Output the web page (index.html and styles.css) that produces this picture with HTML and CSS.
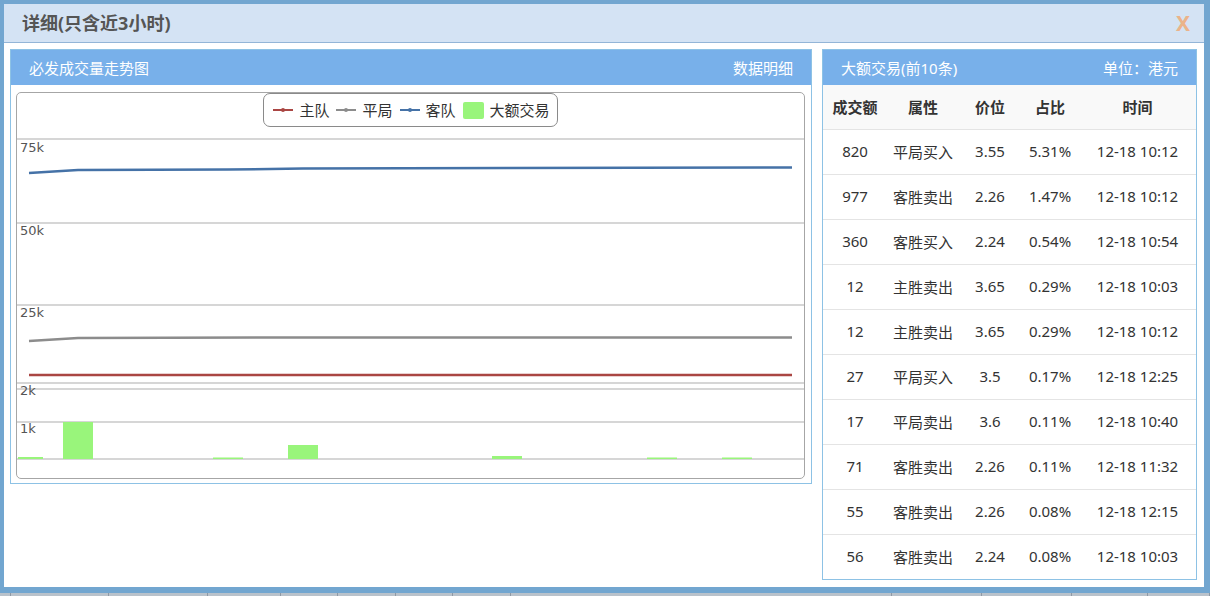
FILE: index.html
```html
<!DOCTYPE html>
<html lang="zh-CN">
<head>
<meta charset="utf-8">
<title>详细</title>
<link rel="stylesheet" href="styles.css">
</head>
<body>
<div class="window">
  <div class="titlebar">
    <span class="title">详细(只含近3小时)</span>
    <span class="close">X</span>
  </div>
  <div class="content">
    <div class="panel panel-chart">
      <div class="panel-head"><span>必发成交量走势图</span><span>数据明细</span></div>
      <div class="chart-box">
        <div class="legend">
          <span class="lg-item"><svg class="lg-line" width="20" height="8" viewBox="0 0 20 8"><line x1="0" y1="4" x2="20" y2="4" stroke="#aa4643" stroke-width="2"/><circle cx="10" cy="4" r="2" fill="#aa4643"/></svg>主队</span>
          <span class="lg-item"><svg class="lg-line" width="20" height="8" viewBox="0 0 20 8"><line x1="0" y1="4" x2="20" y2="4" stroke="#8c8c8c" stroke-width="2"/><circle cx="10" cy="4" r="2" fill="#8c8c8c"/></svg>平局</span>
          <span class="lg-item"><svg class="lg-line" width="20" height="8" viewBox="0 0 20 8"><line x1="0" y1="4" x2="20" y2="4" stroke="#4572a7" stroke-width="2"/><circle cx="10" cy="4" r="2" fill="#4572a7"/></svg>客队</span>
          <span class="lg-item"><span class="lg-box"></span>大额交易</span>
        </div>
        <svg class="plot" width="787" height="351" viewBox="0 0 787 351">
          <g stroke="#c9c9c9" stroke-width="1.5">
            <line x1="0" y1="12" x2="787" y2="12"/>
            <line x1="0" y1="96" x2="787" y2="96"/>
            <line x1="0" y1="178" x2="787" y2="178"/>
            <line x1="0" y1="256" x2="787" y2="256"/>
            <line x1="0" y1="262" x2="787" y2="262"/>
            <line x1="0" y1="295" x2="787" y2="295"/>
            <line x1="0" y1="332" x2="787" y2="332"/>
          </g>
          <g class="axis-label" fill="#555" font-size="13">
            <text x="3" y="25">75k</text>
            <text x="3" y="108">50k</text>
            <text x="3" y="190">25k</text>
            <text x="3" y="268">2k</text>
            <text x="3" y="306">1k</text>
          </g>
          <polyline fill="none" stroke="#4572a7" stroke-width="2.5" points="12,46 61,43 211,42.5 286,41.5 490,41 775,40.5"/>
          <polyline fill="none" stroke="#8c8c8c" stroke-width="2.5" points="12,214 61,211 286,210.5 775,210.5"/>
          <polyline fill="none" stroke="#aa4643" stroke-width="2.5" points="12,248 775,248"/>
          <g fill="#99f57b">
            <rect x="1" y="330" width="25" height="2"/>
            <rect x="46" y="295" width="30" height="37"/>
            <rect x="196" y="330.5" width="30" height="1.5"/>
            <rect x="271" y="318" width="30" height="14"/>
            <rect x="475" y="329" width="30" height="3"/>
            <rect x="630" y="330.5" width="30" height="1.5"/>
            <rect x="705" y="330.5" width="30" height="1.5"/>
          </g>
        </svg>
      </div>
    </div>
    <div class="panel panel-table">
      <div class="panel-head"><span>大额交易(前10条)</span><span>单位：港元</span></div>
      <table class="trades">
        <colgroup><col class="c1"><col class="c2"><col class="c3"><col class="c4"><col class="c5"></colgroup>
        <thead>
          <tr><th>成交额</th><th>属性</th><th>价位</th><th>占比</th><th>时间</th></tr>
        </thead>
        <tbody>
          <tr><td>820</td><td>平局买入</td><td>3.55</td><td>5.31%</td><td>12-18 10:12</td></tr>
          <tr><td>977</td><td>客胜卖出</td><td>2.26</td><td>1.47%</td><td>12-18 10:12</td></tr>
          <tr><td>360</td><td>客胜买入</td><td>2.24</td><td>0.54%</td><td>12-18 10:54</td></tr>
          <tr><td>12</td><td>主胜卖出</td><td>3.65</td><td>0.29%</td><td>12-18 10:03</td></tr>
          <tr><td>12</td><td>主胜卖出</td><td>3.65</td><td>0.29%</td><td>12-18 10:12</td></tr>
          <tr><td>27</td><td>平局买入</td><td>3.5</td><td>0.17%</td><td>12-18 12:25</td></tr>
          <tr><td>17</td><td>平局卖出</td><td>3.6</td><td>0.11%</td><td>12-18 10:40</td></tr>
          <tr><td>71</td><td>客胜卖出</td><td>2.26</td><td>0.11%</td><td>12-18 11:32</td></tr>
          <tr><td>55</td><td>客胜卖出</td><td>2.26</td><td>0.08%</td><td>12-18 12:15</td></tr>
          <tr><td>56</td><td>客胜卖出</td><td>2.24</td><td>0.08%</td><td>12-18 10:03</td></tr>
        </tbody>
      </table>
    </div>
  </div>
</div>
<div class="under">
  <span class="u1"></span><span class="u2"></span><span class="u3"></span><span class="u4"></span><span class="u5"></span><span class="u6"></span><span class="u7"></span><span class="u8"></span><span class="u9"></span><span class="u10"></span><span class="u11"></span><span class="u12"></span><span class="u13"></span>
</div>
</body>
</html>
```

FILE: styles.css
```css
* { box-sizing: border-box; }
html, body {
  margin: 0;
  padding: 0;
  width: 1210px;
  height: 596px;
  overflow: hidden;
  background: #72a6d0;
  font-family: "Noto Sans", "Noto Sans CJK SC", sans-serif;
  color: #333;
}
.window {
  width: 1210px;
  height: 593px;
  border: 4px solid #72a6d0;
  border-right-width: 6px;
  border-bottom-width: 6px;
  background: #fff;
  display: flex;
  flex-direction: column;
}
.titlebar {
  height: 39px;
  flex: none;
  background: #d4e3f4;
  border-bottom: 1px solid #93b5d7;
  display: flex;
  align-items: center;
  justify-content: space-between;
  padding: 0 14px 0 18px;
}
.title {
  font-size: 18px;
  font-weight: bold;
  color: #555;
  line-height: 24px;
}
.close {
  font-size: 21px;
  font-weight: bold;
  color: #ebb38a;
  line-height: 24px;
  font-family: "Noto Sans", sans-serif;
}
.content {
  display: flex;
  align-items: flex-start;
  gap: 10px;
  padding: 6px 7px 0 6px;
}
.panel {
  border: 1px solid #8dc2e5;
  background: #fff;
  flex: none;
}
.panel-chart { width: 802px; height: 435px; }
.panel-table { width: 375px; height: 531px; }
.panel-head {
  height: 35px;
  background: #78b0ea;
  color: #fff;
  font-size: 15px;
  display: flex;
  align-items: center;
  justify-content: space-between;
  padding: 0 18px;
}
.chart-box {
  margin: 7px 6px 0 5px;
  height: 387px;
  border: 1px solid #a6a6a6;
  border-radius: 5px;
  display: flex;
  flex-direction: column;
  overflow: hidden;
}
.legend {
  align-self: center;
  height: 34px;
  border: 1px solid #8a8a8a;
  border-radius: 7px;
  padding: 0 7px 0 9px;
  display: flex;
  align-items: center;
  gap: 7px;
  font-size: 15px;
  color: #333;
}
.lg-item {
  display: flex;
  align-items: center;
  gap: 6px;
  line-height: 18px;
}
.lg-line { display: block; }
.lg-box {
  width: 21px;
  height: 17px;
  background: #99f57b;
  border-radius: 2px;
}
.plot { display: block; }
.axis-label { font-family: "DejaVu Sans", sans-serif; }
.trades {
  width: 373px;
  border-collapse: collapse;
  table-layout: fixed;
  font-size: 15px;
  color: #333;
}
.c1 { width: 64px; }
.c2 { width: 72px; }
.c3 { width: 62px; }
.c4 { width: 58px; }
.c5 { width: 117px; }
.trades th {
  height: 44px;
  padding: 0 0 1px;
  font-weight: bold;
  background: #f9f9f9;
  text-align: center;
}
.trades td {
  height: 45px;
  padding: 0 0 1px;
  border-top: 1px solid #e4e4e4;
  text-align: center;
}
.under {
  height: 3px;
  display: flex;
  background: #b9c2cb;
}
.under span { border-right: 1px solid #8e99a5; height: 3px; }
.u1 { width: 11px; }
.u2 { width: 98px; }
.u3 { width: 99px; }
.u4 { width: 73px; }
.u5 { width: 57px; }
.u6 { width: 58px; }
.u7 { width: 57px; }
.u8 { width: 58px; }
.u9 { width: 381px; }
.u10 { width: 90px; }
.u11 { width: 90px; }
.u12 { width: 76px; }
.u13 { width: 62px; border-right: none; }
```
